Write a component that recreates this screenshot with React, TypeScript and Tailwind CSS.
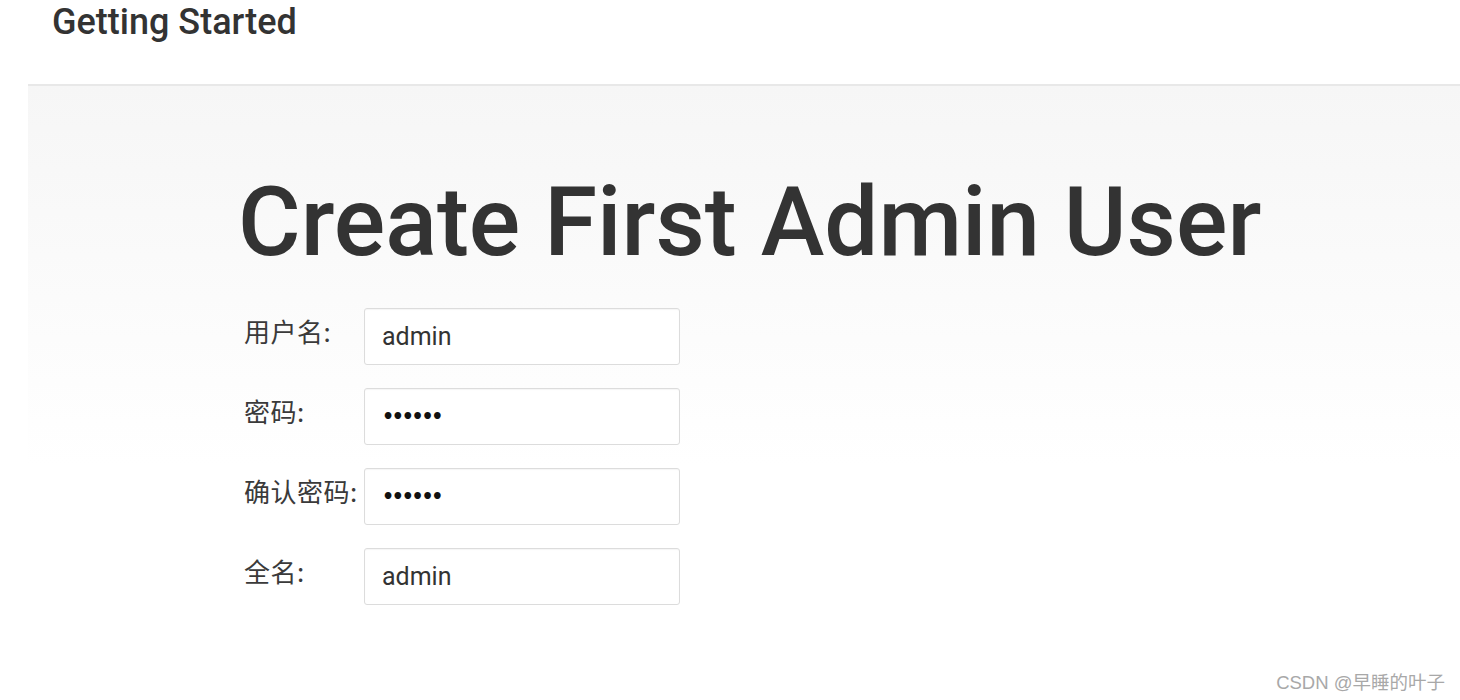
import React from "react";

const fields = [
  { label: "用户名:", value: "admin", secret: false },
  { label: "密码:", value: "••••••", secret: true },
  { label: "确认密码:", value: "••••••", secret: true },
  { label: "全名:", value: "admin", secret: false },
];

export default function App() {
  return (
    <div className="relative w-[1460px] h-[700px] overflow-hidden bg-white font-['Roboto','Noto_Sans_CJK_SC',sans-serif] text-[#333]">
      <header className="h-[84px] pl-[52px] pt-[4px]">
        <h2 className="text-[36px] leading-none font-medium">Getting Started</h2>
      </header>

      <div className="ml-[28px] h-[616px] border-t-2 border-[#e8e8e8] bg-[linear-gradient(to_bottom,#f6f6f6,#ffffff_380px)]">
        <div className="pl-[210px] pt-[88px]">
          <h1 className="text-[96px] leading-none font-medium text-[#333]">Create First Admin User</h1>

          <div className="mt-[38px] ml-[6px] flex flex-col gap-[23px]">
            {fields.map((f) => (
              <div key={f.label} className="flex items-start">
                <label className="w-[120px] mt-[10px] text-[26px] leading-none tracking-[0.5px] text-[#3a3a3a] font-['Noto_Sans_CJK_SC',sans-serif]">
                  {f.label}
                </label>
                <div className="w-[316px] h-[57px] flex items-center border border-[#dcdcdc] rounded-[3px] bg-white pl-[17px] shadow-[inset_0_1px_1px_rgba(0,0,0,0.04)]">
                  {f.secret ? (
                    <span className="text-[19px] leading-none tracking-[-2.3px] text-[#111] font-bold font-['DejaVu_Sans',sans-serif]">
                      {f.value}
                    </span>
                  ) : (
                    <span className="text-[25px] leading-none text-[#333]">{f.value}</span>
                  )}
                </div>
              </div>
            ))}
          </div>
        </div>
      </div>

      <div className="absolute right-[15px] bottom-[8px] text-[18.5px] leading-none text-[#a8a8a8] font-['Liberation_Sans','Noto_Sans_CJK_SC',sans-serif]">
        CSDN @早睡的叶子
      </div>
    </div>
  );
}
